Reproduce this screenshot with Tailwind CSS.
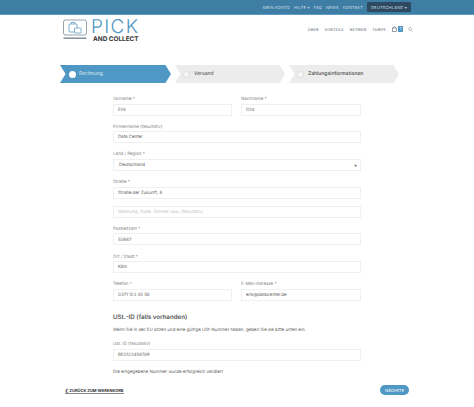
<!DOCTYPE html>
<html lang="de">
<head>
    <meta charset="UTF-8">
    <meta name="viewport" content="width=device-width, initial-scale=1.0">
    <title>Pick and Collect - Kasse</title>
    <script src="https://cdn.jsdelivr.net/npm/@tailwindcss/browser@4"></script>
</head>
<body class="bg-white overflow-hidden font-['Inter',sans-serif] text-[#666] [text-rendering:geometricPrecision]">
    <div class="h-[15px] bg-[#3f7ea4] border-b border-[#5c9cc4] flex items-center justify-end pr-[63px] text-[4px] text-[#c9dbe6] tracking-[0.2px]">
        <span class="mr-[4px] pt-[1px]">MEIN KONTO</span>
        <span class="mr-[4px] pt-[1px]">HILFE ▾</span>
        <span class="mr-[4px] pt-[1px]">FAQ</span>
        <span class="mr-[4px] pt-[1px]">NEWS</span>
        <span class="mr-[4px] pt-[1px]">KONTAKT</span>
        <span class="w-[44px] h-[10px] pt-[1px] bg-[#2d4a60] flex items-center justify-center rounded-[1px]">DEUTSCHLAND ▾</span>
    </div>

    <header class="h-[50px] pl-[63px] pr-[61px] flex items-start justify-between">
        <div class="flex mt-[4px]">
            <svg width="24" height="21" viewBox="0 0 24 21" fill="none" stroke="#7d8a94" stroke-width="0.8">
                <rect x="0.5" y="1" width="23" height="15" rx="2"/>
                <rect x="6" y="5" width="8" height="8" rx="1" stroke="#5f9cc4"/>
                <path d="M8 5V3.5h4V5" stroke="#5f9cc4"/>
                <rect x="11.5" y="9" width="6.5" height="5" rx="0.6" fill="#fff" stroke="#5f9cc4"/>
                <rect x="0.5" y="18.5" width="23" height="1.4" fill="#7d8a94" stroke="none"/>
            </svg>
            <div class="ml-[4px] flex flex-col leading-none">
                <span class="text-[#4f97c4] text-[19px] font-light h-[15px] leading-[15px] tracking-[1.3px]">PICK</span>
                <span class="text-[#333] text-[6.4px] font-bold mt-[2px] ml-[2px] whitespace-nowrap">AND COLLECT</span>
            </div>
        </div>
        <nav class="flex items-center mt-[11px] text-[3.9px] text-[#5a6670] tracking-[0.1px]">
            <span class="mr-[6px] pt-[1px]">ÜBER</span>
            <span class="mr-[6px] pt-[1px]">VORTEILE</span>
            <span class="mr-[6px] pt-[1px]">BETRIEB</span>
            <span class="mr-[6px] pt-[1px]">TARIFE</span>
            <svg class="mr-[1px]" width="5" height="6" viewBox="0 0 5 6" fill="none" stroke="#5a6670" stroke-width="0.6"><rect x="0.5" y="2" width="4" height="3.6"/><path d="M1.5 2C1.5 0 3.5 0 3.5 2"/></svg>
            <span class="w-[5px] h-[6px] bg-[#4f97c4] text-white text-[4px] flex items-center justify-center mr-[5px]">1</span>
            <svg width="5" height="5" viewBox="0 0 5 5" fill="none" stroke="#98a2aa" stroke-width="0.6"><circle cx="2" cy="2" r="1.5"/><path d="M3.2 3.2L4.8 4.8"/></svg>
        </nav>
    </header>

    <div class="flex pl-[60px] gap-[4px] h-[18px] text-[5px]">
        <div class="w-[111px] flex items-center pl-[9px] bg-[#4f97c4] text-[#dcebf4] [clip-path:polygon(0_0,95%_0,100%_50%,95%_100%,0_100%,5%_50%)]">
            <span class="w-[7px] h-[7px] rounded-full bg-white mr-[3px]"></span><span class="pt-[2px]">Rechnung</span>
        </div>
        <div class="w-[110px] flex items-center pl-[8px] bg-[#ececec] text-[#444] [clip-path:polygon(0_0,95%_0,100%_50%,95%_100%,0_100%,5%_50%)]">
            <span class="w-[7px] h-[7px] rounded-full bg-[#f7f7f7] border border-[#ddd] mr-[4px]"></span><span class="pt-[2px]">Versand</span>
        </div>
        <div class="w-[110px] flex items-center pl-[8px] bg-[#ececec] text-[#444] font-medium [clip-path:polygon(0_0,95%_0,100%_50%,95%_100%,0_100%,5%_50%)]">
            <span class="w-[7px] h-[7px] rounded-full bg-[#f7f7f7] border border-[#ddd] mr-[4px]"></span><span class="pt-[2px]">Zahlungsinformationen</span>
        </div>
    </div>

    <main class="ml-[113px] w-[248px] mt-[12px] text-[4.4px]">
        <div class="flex gap-[9px]">
            <div class="w-[119px]">
                <label class="block h-[6px] leading-[9px] text-[#888]">Vorname *</label>
                <div class="mt-[2.5px] h-[12px] mb-[7.2px] pl-[4px] pt-[3px] flex items-center border border-[#f0f0f0]">Erik</div>
            </div>
            <div class="w-[120px]">
                <label class="block h-[6px] leading-[9px] text-[#888]">Nachname *</label>
                <div class="mt-[2.5px] h-[12px] mb-[7.2px] pl-[4px] pt-[3px] flex items-center border border-[#f0f0f0]">Cirs</div>
            </div>
        </div>
        <label class="block h-[6px] leading-[9px] text-[#888]">Firmenname (fakultativ)</label>
        <div class="mt-[2.5px] h-[12px] mb-[7.2px] pl-[4px] pt-[3px] flex items-center border border-[#f0f0f0]">Data Center</div>
        <label class="block h-[6px] leading-[9px] text-[#888]">Land / Region *</label>
        <div class="mt-[2.5px] h-[12px] mb-[7.2px] pl-[5px] pr-[3px] pt-[3px] flex items-center justify-between border border-[#f0f0f0]">Deutschland<span class="text-[3px] text-[#777]">▼</span></div>
        <label class="block h-[6px] leading-[9px] text-[#888]">Straße *</label>
        <div class="mt-[2.5px] h-[12px] mb-[7px] pl-[4px] pt-[3px] flex items-center border border-[#f0f0f0]">Straße der Zukunft, 6</div>
        <div class="h-[12px] mb-[7.3px] pl-[4px] pt-[3px] flex items-center border border-[#f0f0f0] text-[#c4c4c4]">Wohnung, Suite, Zimmer usw. (fakultativ)</div>
        <label class="block h-[6px] leading-[9px] text-[#888]">Postleitzahl *</label>
        <div class="mt-[2.5px] h-[12px] mb-[7.2px] pl-[4px] pt-[3px] flex items-center border border-[#f0f0f0]">50667</div>
        <label class="block h-[6px] leading-[9px] text-[#888]">Ort / Stadt *</label>
        <div class="mt-[2.5px] h-[12px] mb-[7.2px] pl-[4px] pt-[3px] flex items-center border border-[#f0f0f0]">Köln</div>
        <div class="flex gap-[9px]">
            <div class="w-[119px]">
                <label class="block h-[6px] leading-[9px] text-[#888]">Telefon *</label>
                <div class="mt-[2.5px] h-[12px] pl-[4px] pt-[3px] flex items-center border border-[#f0f0f0]">0371 123 45 56</div>
            </div>
            <div class="w-[120px]">
                <label class="block h-[6px] leading-[9px] text-[#888]">E-Mail-Adresse *</label>
                <div class="mt-[2.5px] h-[12px] pl-[4px] pt-[3px] flex items-center border border-[#f0f0f0]">erik@datacenter.de</div>
            </div>
        </div>
        <h3 class="mt-[11px] h-[9px] leading-[12px] text-[6.2px] font-semibold text-[#555]">USt.-ID (falls vorhanden)</h3>
        <p class="mt-[5.5px] h-[6px] leading-[9px] whitespace-nowrap">Wenn Sie in der EU sitzen und eine gültige USt-Nummer haben, geben Sie sie bitte unten ein.</p>
        <label class="block mt-[8px] h-[6px] leading-[9px] text-[#888]">Ust. ID (fakultativ)</label>
        <div class="mt-[2.5px] h-[12px] pl-[4px] pt-[3px] flex items-center border border-[#f0f0f0]">BE0123456789</div>
        <p class="mt-[7.5px] h-[6px] leading-[9px] whitespace-nowrap">Die eingegebene Nummer wurde erfolgreich validiert</p>
    </main>

    <div class="mt-[10.7px] ml-[65px] w-[344px] flex items-start justify-between">
        <span class="mt-[2px] h-[7px] border-b-[1.5px] border-[#888] text-[4px] font-bold text-[#333] leading-[8px] whitespace-nowrap">❮ ZURÜCK ZUM WARENKORB</span>
        <span class="w-[29px] h-[10px] pt-[2px] rounded-full bg-[#4f97c4] text-white text-[4px] flex items-center justify-center">NÄCHSTE</span>
    </div>
</body>
</html>
